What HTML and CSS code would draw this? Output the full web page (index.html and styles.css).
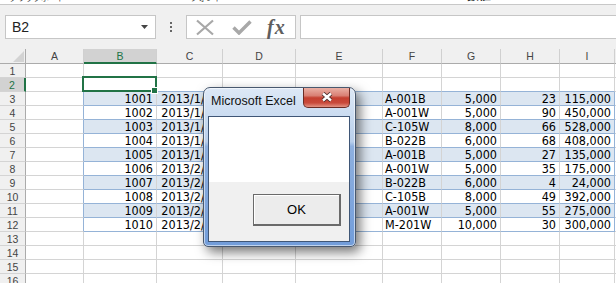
FILE: index.html
```html
<!DOCTYPE html>
<html lang="ja">
  <head>
    <meta charset="UTF-8" />
    <title>Microsoft Excel</title>
    <link rel="stylesheet" href="styles.css">
  </head>
  <body>
    <!-- bottom edge of the ribbon, mostly scrolled away -->
    <div class="ribbon-edge">
      <span class="rib-1">クリップボード</span>
      <span class="rib-2">フォント</span>
      <span class="rib-3">数値</span>
    </div>

    <!-- Name box + formula bar -->
    <div class="formula-bar">
      <div class="name-box">
        <span>B2</span>
        <svg class="caret" width="7" height="4" viewBox="0 0 7 4"><path d="M0 0h7L3.5 4z" fill="#444"/></svg>
      </div>
      <svg class="grip" width="3" height="11" viewBox="0 0 3 11">
        <rect x="0" y="0" width="2" height="2" fill="#666"/>
        <rect x="0" y="4" width="2" height="2" fill="#666"/>
        <rect x="0" y="8" width="2" height="2" fill="#666"/>
      </svg>
      <div class="fx-buttons">
        <svg class="btn-cancel" width="20" height="17" viewBox="0 0 20 17">
          <path d="M2 1.5L18 15.5M18 1.5L2 15.5" stroke="#a8a8a8" stroke-width="2.2" fill="none"/>
        </svg>
        <svg class="btn-enter" width="20" height="15" viewBox="0 0 20 15">
          <path d="M1.5 7.5L7 13L18.5 1.5" stroke="#a8a8a8" stroke-width="3.4" fill="none"/>
        </svg>
        <span class="fx">fx</span>
      </div>
      <div class="formula-input"></div>
    </div>

    <!-- Worksheet -->
    <div class="sheet" id="sheet"></div>

    <!-- Message box -->
    <div class="dialog">
      <div class="dialog-title">
        <span class="dialog-caption">Microsoft Excel</span>
        <div class="dialog-close">
          <svg width="14" height="10" viewBox="0 0 14 10">
            <path d="M3 1.5L11 8.5M11 1.5L3 8.5" stroke="#4a2a28" stroke-width="4.2" fill="none"/>
            <path d="M3 1.5L11 8.5M11 1.5L3 8.5" stroke="#fff" stroke-width="2.4" fill="none"/>
          </svg>
        </div>
      </div>
      <div class="dialog-client">
        <div class="dialog-message"></div>
        <div class="dialog-buttons">
          <div class="ok-button">OK</div>
        </div>
      </div>
    </div>

    <script>
      const letters = ["A", "B", "C", "D", "E", "F", "G", "H", "I", "J"];

      // rows 3..12 of the sheet: B, C, D, E, F, G, H, I
      const data = [
        ["1001", "2013/1/10", "", "", "A-001B", "5,000", "23", "115,000"],
        ["1002", "2013/1/12", "", "", "A-001W", "5,000", "90", "450,000"],
        ["1003", "2013/1/15", "", "", "C-105W", "8,000", "66", "528,000"],
        ["1004", "2013/1/20", "", "", "B-022B", "6,000", "68", "408,000"],
        ["1005", "2013/1/25", "", "", "A-001B", "5,000", "27", "135,000"],
        ["1006", "2013/2/01", "", "", "A-001W", "5,000", "35", "175,000"],
        ["1007", "2013/2/05", "", "", "B-022B", "6,000", "4", "24,000"],
        ["1008", "2013/2/10", "", "", "C-105B", "8,000", "49", "392,000"],
        ["1009", "2013/2/18", "", "", "A-001W", "5,000", "55", "275,000"],
        ["1010", "2013/2/25", "", "", "M-201W", "10,000", "30", "300,000"]
      ];

      const sheet = document.getElementById("sheet");

      function addCell(cls, text) {
        const div = document.createElement("div");
        div.className = cls;
        if (text) div.textContent = text;
        sheet.appendChild(div);
      }

      // column headers
      addCell("corner");
      letters.forEach((l) => {
        addCell(l === "B" ? "col-head selected" : "col-head", l);
      });

      // rows
      for (let r = 1; r <= 16; r++) {
        addCell(r === 2 ? "row-head selected" : "row-head", String(r));
        const inTable = r >= 3 && r <= 12;
        const values = inTable ? data[r - 3] : null;

        letters.forEach((l, c) => {
          let cls = "cell";
          let text = "";
          if (inTable && c >= 1 && c <= 8) {
            cls += " tbl";
            if (r % 2 === 1) cls += " band";
            text = values[c - 1];
            cls += l === "F" ? " left" : " right";
          }
          if (inTable && (l === "A" || l === "I")) cls += " tbl-edge";
          if (r === 2 && c >= 1 && c <= 8) cls += " tbl-top";
          if (r === 2 && l === "B") cls += " active";
          addCell(cls, text);
        });
      }
    </script>
  </body>
</html>
```

FILE: styles.css
```css
/* General */
body {
  margin: 0;
  width: 616px;
  height: 283px;
  overflow: hidden;
  position: relative;
  background: #fff;
  font-family: "Liberation Sans", Arial, sans-serif;
}

/* Ribbon remains */
.ribbon-edge {
  height: 4px;
  background: #fff;
  border-bottom: 1px solid #c8c8c8;
  overflow: hidden;
  display: flex;
  font-family: "Noto Sans CJK JP", sans-serif;
  font-size: 8px;
  line-height: 10px;
  color: #333;
}

.ribbon-edge span {
  display: block;
  margin-top: -7px;
}

.rib-1 {
  margin-left: 9px;
}

.rib-2 {
  margin-left: 125px;
}

.rib-3 {
  margin-left: 245px;
  font-size: 12px;
  font-weight: bold;
  margin-top: -10px !important;
}

/* Formula bar */
.formula-bar {
  height: 44px;
  box-sizing: border-box;
  padding-top: 10px;
  background: #f0f0f0;
  display: flex;
  align-items: flex-start;
}

.name-box {
  margin-left: 5px;
  width: 151px;
  height: 24px;
  box-sizing: border-box;
  border: 1px solid #c6c6c6;
  background: #fff;
  display: flex;
  align-items: center;
  justify-content: space-between;
  padding: 0 7px 0 6px;
  font-size: 14px;
  color: #222;
}

.grip {
  margin: 7px 0 0 14px;
}

.fx-buttons {
  margin-left: 13px;
  width: 110px;
  height: 24px;
  box-sizing: border-box;
  border: 1px solid #c6c6c6;
  background: #fff;
  display: flex;
  align-items: center;
}

.btn-cancel {
  margin-left: 8px;
}

.btn-enter {
  margin-left: 17px;
  margin-top: 1px;
}

.fx {
  margin-left: 15px;
  font-family: "Liberation Serif", serif;
  font-style: italic;
  font-weight: bold;
  font-size: 20px;
  letter-spacing: 1px;
  color: #5e5e5e;
  line-height: 20px;
}

.formula-input {
  flex: 1;
  margin-left: 4px;
  height: 24px;
  box-sizing: border-box;
  border: 1px solid #c6c6c6;
  border-right: none;
  background: #fff;
}

/* Worksheet grid */
.sheet {
  display: grid;
  grid-template-columns: 26px 58px 73px 66px 73px 87px 59px 59px 59px 55px 40px;
  grid-template-rows: 15px;
  grid-auto-rows: 14px;
}

.sheet > div {
  box-sizing: border-box;
  white-space: nowrap;
  overflow: hidden;
}

.corner {
  background: #f0f0f0 url("data:image/svg+xml,%3Csvg xmlns='http://www.w3.org/2000/svg' width='11' height='11'%3E%3Cpath d='M11 0V11H0z' fill='%23d3d3d3'/%3E%3C/svg%3E") no-repeat 13px 2px;
  border-right: 1px solid #ababab;
  border-bottom: 1px solid #ababab;
}

.col-head,
.row-head {
  background: #f0f0f0;
  color: #444;
  font-size: 10.5px;
  text-align: center;
}

.col-head {
  line-height: 15px;
  border-right: 1px solid #d0d0d0;
  border-bottom: 1px solid #ababab;
}

.row-head {
  line-height: 14px;
  border-right: 1px solid #ababab;
  border-bottom: 1px solid #d4d4d4;
}

.col-head.selected {
  background: #d2d2d2;
  color: #217346;
  border-bottom: 2px solid #217346;
  line-height: 14px;
}

.row-head.selected {
  background: #d2d2d2;
  color: #217346;
  border-right: 2px solid #217346;
}

.cell {
  border-right: 1px solid #d4d4d4;
  border-bottom: 1px solid #d4d4d4;
  padding: 0 3px 0 2px;
  font-family: "Liberation Sans Narrow", "DejaVu Sans Condensed", "Liberation Sans", sans-serif;
  font-size: 12.5px;
  line-height: 13px;
  color: #000;
}

.cell.right {
  text-align: right;
}

.cell.band {
  background: #dce6f1;
}

.cell.tbl,
.cell.tbl-top {
  border-bottom-color: #95b3d7;
}

.cell.tbl-edge {
  border-right-color: #95b3d7;
}

/* Active cell */
.cell.active {
  position: relative;
  overflow: visible;
}

.cell.active::after {
  content: "";
  position: absolute;
  left: -2px;
  top: -2px;
  right: -1px;
  bottom: -1px;
  border: 2px solid #217346;
}

.cell.active::before {
  content: "";
  position: absolute;
  right: -2px;
  bottom: -3px;
  width: 5px;
  height: 5px;
  background: #217346;
  border: 1px solid #fff;
  z-index: 1;
}

/* Message box */
.dialog {
  position: absolute;
  left: 203px;
  top: 87px;
  width: 153px;
  height: 160px;
  box-sizing: border-box;
  border: 1px solid #48586e;
  border-radius: 7px 7px 5px 5px;
  background: linear-gradient(180deg, #dde8f6 0%, #c8daf0 20%, #b9cfeb 34%, #8eb0df 37%, #80a6dc 70%, #729dda 100%);
  box-shadow: inset 0 0 0 1px rgba(255, 255, 255, 0.55), 4px 5px 12px rgba(0, 0, 0, 0.55);
  display: flex;
  flex-direction: column;
}

.dialog-title {
  height: 28px;
  display: flex;
  align-items: flex-start;
  padding-left: 7px;
}

.dialog-caption {
  margin-top: 6px;
  font-size: 12.5px;
  line-height: 15px;
  color: #111;
}

.dialog-close {
  margin-left: auto;
  margin-right: 5px;
  width: 47px;
  height: 20px;
  box-sizing: border-box;
  border: 1px solid #6b2c25;
  border-top: none;
  border-radius: 0 0 5px 5px;
  background: linear-gradient(180deg, #eab0a5 0%, #d98074 40%, #c43f30 52%, #c9493a 78%, #e39383 100%);
  display: flex;
  align-items: center;
  justify-content: center;
  padding-bottom: 2px;
}

.dialog-client {
  margin: 0 5px 0 4px;
  height: 126px;
  box-sizing: border-box;
  border: 1px solid #3f5676;
  display: flex;
  flex-direction: column;
}

.dialog-message {
  height: 65px;
  background: #fff;
}

.dialog-buttons {
  flex: 1;
  background: #f0f0f0;
  display: flex;
  justify-content: flex-end;
  align-items: flex-start;
  padding: 12px 8px 0 0;
}

.ok-button {
  width: 88px;
  height: 32px;
  box-sizing: border-box;
  border-style: solid;
  border-color: #6a6a6a;
  border-width: 1px 2px 2px 1px;
  background: #ececec;
  box-shadow: inset 1px 1px 0 #fff;
  display: flex;
  align-items: center;
  justify-content: center;
  font-size: 13px;
  color: #000;
}
```
